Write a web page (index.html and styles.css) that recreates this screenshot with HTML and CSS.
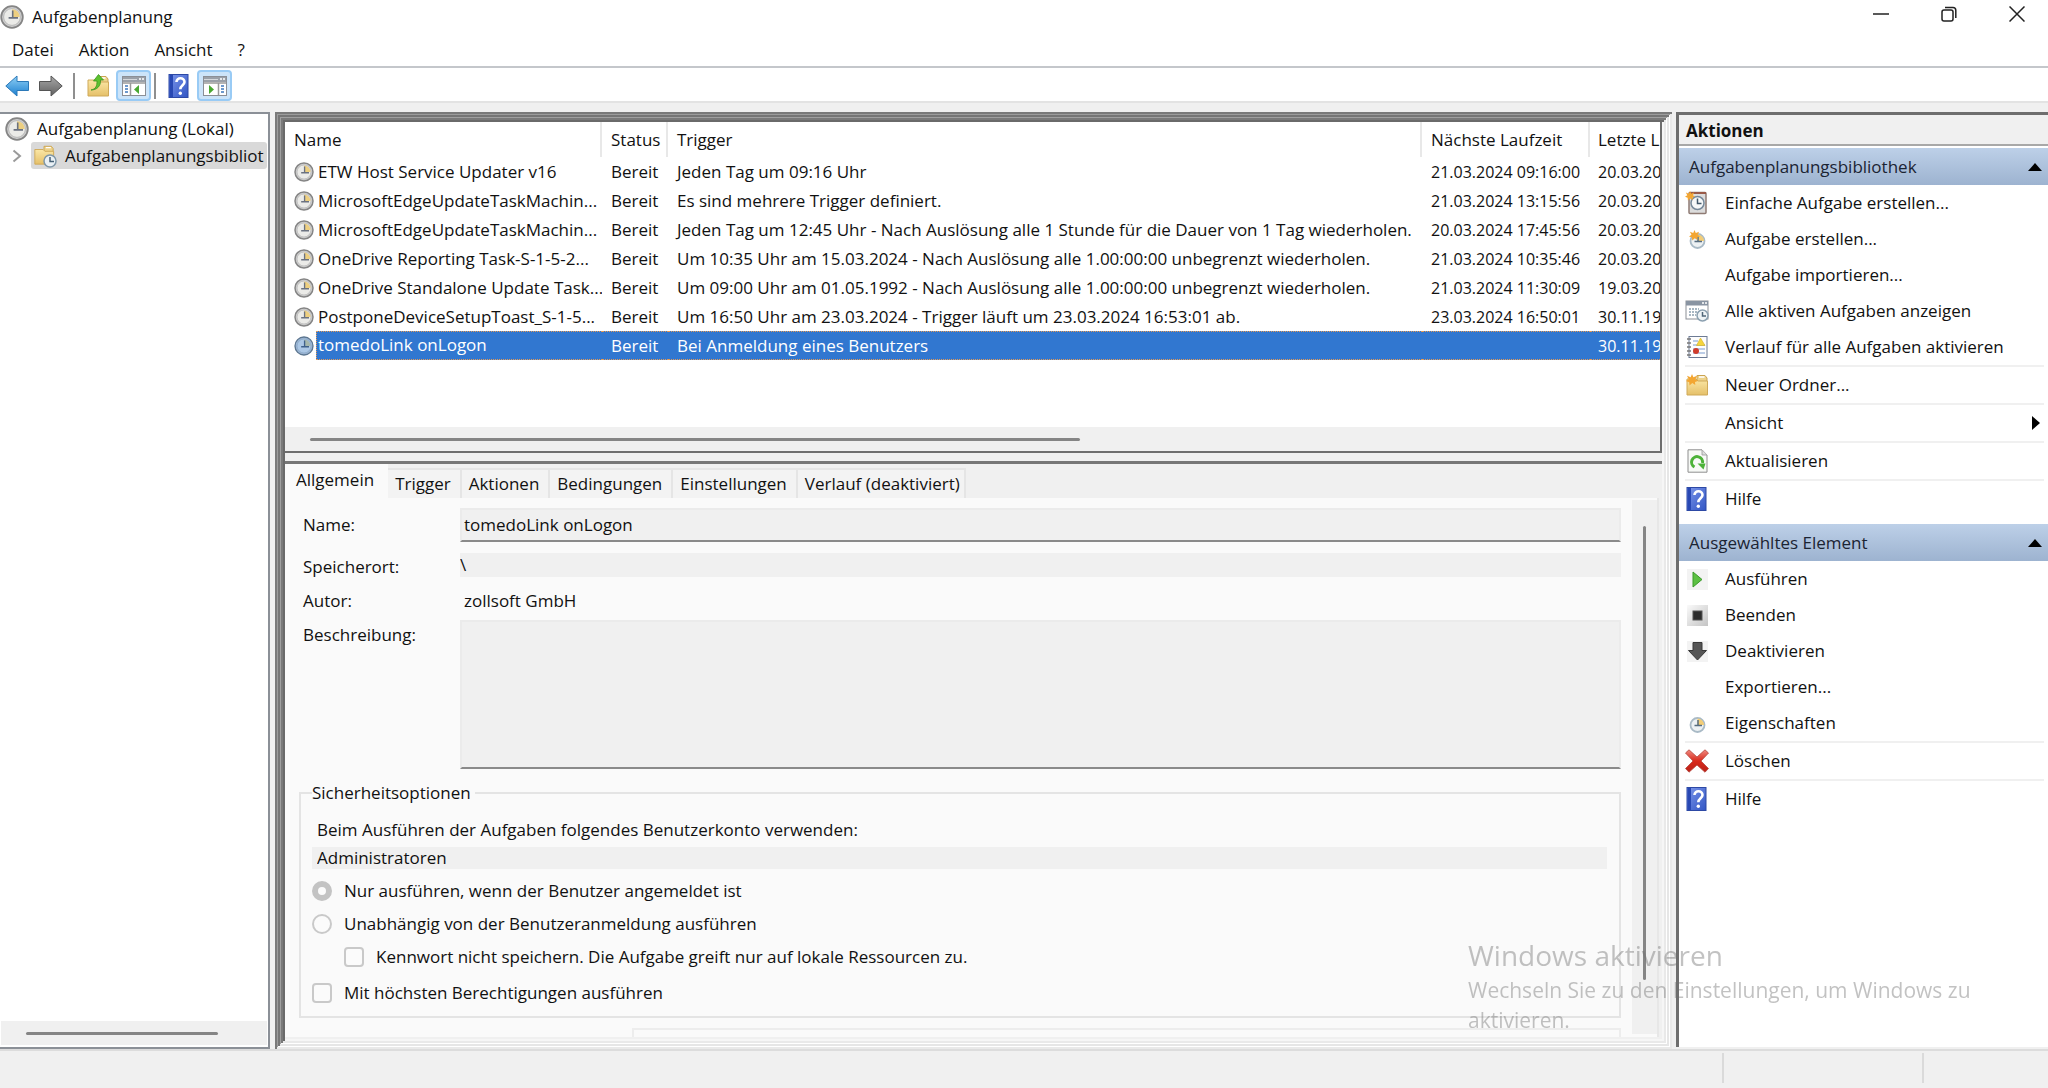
FILE: index.html
```html
<!DOCTYPE html>
<html lang="de">
<head>
<meta charset="utf-8">
<title>Aufgabenplanung</title>
<link rel="stylesheet" href="styles.css">
</head>
<body>
<svg class="defs" aria-hidden="true">
  <defs>
    <linearGradient id="g-blue" x1="0" y1="0" x2="0" y2="1"><stop offset="0" stop-color="#8fd0f5"/><stop offset="1" stop-color="#1c7fd0"/></linearGradient>
    <linearGradient id="g-grey" x1="0" y1="0" x2="0" y2="1"><stop offset="0" stop-color="#a8a8a8"/><stop offset="1" stop-color="#606060"/></linearGradient>
    <linearGradient id="g-folder" x1="0" y1="0" x2="0" y2="1"><stop offset="0" stop-color="#fbe7a6"/><stop offset="1" stop-color="#e5c069"/></linearGradient>
    <linearGradient id="g-help" x1="0" y1="0" x2="1" y2="1"><stop offset="0" stop-color="#7d97ea"/><stop offset="1" stop-color="#3155c4"/></linearGradient>
    <linearGradient id="g-red" x1="0" y1="0" x2="0" y2="1"><stop offset="0" stop-color="#ef8a80"/><stop offset="0.5" stop-color="#d92a1c"/><stop offset="1" stop-color="#b92218"/></linearGradient>
    <linearGradient id="g-stop" x1="0" y1="0" x2="1" y2="1"><stop offset="0" stop-color="#fafafa"/><stop offset="1" stop-color="#c4c4c4"/></linearGradient>
    <symbol id="clock" viewBox="0 0 24 24">
      <circle cx="12" cy="12" r="10.8" fill="#d0d0d0" stroke="#858585" stroke-width="1.8"/>
      <circle cx="12" cy="12" r="8.4" fill="#ebebe8" stroke="#b0b0b0" stroke-width="0.8"/>
      <path d="M12 12V4.2A8 8 0 0 1 19.8 12Z" fill="#edcf80"/>
      <path d="M12.7 5.5V12.9M8.6 12.9H18" fill="none" stroke="#6b7280" stroke-width="1.6"/>
    </symbol>
    <symbol id="clock-blue" viewBox="0 0 24 24">
      <circle cx="12" cy="12" r="10.8" fill="#9cb6d4" stroke="#5c7690" stroke-width="1.6"/>
      <circle cx="12" cy="12" r="8.4" fill="#acc8e6" stroke="#86a4c4" stroke-width="0.8"/>
      <path d="M12 12V4.2A8 8 0 0 1 19.8 12Z" fill="#a5b7ac"/>
      <path d="M12.7 5.5V12.9M8.6 12.9H18" fill="none" stroke="#3f618a" stroke-width="1.6"/>
    </symbol>
    <symbol id="clock-small" viewBox="0 0 24 24">
      <circle cx="12.500" cy="14" r="7" fill="#edf1f3" stroke="#a9bac6" stroke-width="1.8"/>
      <path d="M12.500 14V7.500A6.500 6.500 0 0 1 19 14Z" fill="#f3cd76"/>
      <path d="M13 9V14.500M9.500 14.500H17" fill="none" stroke="#566d80" stroke-width="1.5"/>
    </symbol>
    <symbol id="star" viewBox="0 0 12 12"><path d="M6 0L7.400 3.300L11 1.800L9.500 5.200L12 7L9 7.900L9.300 11L6.300 9L3.500 11.500L3.200 8.200L0 7L2.700 5.200L1 1.800L4.600 3.300Z" fill="#f3a632"/></symbol>
    <symbol id="folder" viewBox="0 0 24 24">
      <path d="M12 2.500H20L22 5V12H12Z" fill="#edd28a" stroke="#cba451"/>
      <path d="M14 4H19.500" stroke="#fff" stroke-width="1.5"/>
      <path d="M2 6H11L13 8H22.500V22H2Z" fill="url(#g-folder)" stroke="#cfa959"/>
    </symbol>
    <symbol id="help" viewBox="0 0 24 24">
      <rect x="2" y="0.500" width="19" height="23" fill="url(#g-help)" stroke="#2d49a5"/>
      <rect x="2.500" y="1" width="3.500" height="22" fill="#2848b3"/>
      <path d="M9.500 8C9.500 2.800 17.500 3.200 17.500 8C17.500 11.200 13.300 11.300 13.300 15.300" fill="none" stroke="#fff" stroke-width="2.600"/>
      <circle cx="13.300" cy="19.200" r="1.700" fill="#fff"/>
    </symbol>
    <symbol id="pane-left" viewBox="0 0 24 20">
      <rect x="0.500" y="0.500" width="23" height="19" fill="#fff" stroke="#8b8f96"/>
      <rect x="1" y="1" width="22" height="5" fill="#9aa0a8"/><path d="M1 3.500H15" stroke="#d5d8dc"/><path d="M17 3H22" stroke="#fff" stroke-width="1.500" stroke-dasharray="2 1"/>
      <path d="M1 7H23M8.500 7V19" stroke="#9a9a9a" stroke-width="1.500"/>
      <path d="M3 10H6M3 13H6M3 16H6" stroke="#3e78bd" stroke-width="1.500"/>
      <path d="M17 9V18L12 13.500Z" fill="#4aa832"/>
    </symbol>
    <symbol id="pane-right" viewBox="0 0 24 20">
      <rect x="0.500" y="0.500" width="23" height="19" fill="#fff" stroke="#8b8f96"/>
      <rect x="1" y="1" width="22" height="5" fill="#9aa0a8"/><path d="M1 3.500H15" stroke="#d5d8dc"/><path d="M17 3H22" stroke="#fff" stroke-width="1.500" stroke-dasharray="2 1"/>
      <path d="M1 7H23M15.500 7V19" stroke="#9a9a9a" stroke-width="1.500"/>
      <path d="M18 10H21M18 13H21M18 16H21" stroke="#3e78bd" stroke-width="1.500"/>
      <path d="M6 9V18L11 13.500Z" fill="#4aa832"/>
    </symbol>
  </defs>
</svg>

<header class="titlebar">
  <svg class="ico24"><use href="#clock"/></svg>
  <h1>Aufgabenplanung</h1>
  <div class="window-controls">
    <button aria-label="Minimieren"><svg viewBox="0 0 16 16"><path d="M0 8H16" stroke="#222" stroke-width="1.500"/></svg></button>
    <button aria-label="Wiederherstellen"><svg viewBox="0 0 16 16" fill="none" stroke="#222" stroke-width="1.500"><rect x="1" y="4" width="11" height="11" rx="2"/><path d="M4 1.500H12Q14.800 1.500 14.800 4.300V12"/></svg></button>
    <button aria-label="Schließen"><svg viewBox="0 0 16 16"><path d="M0.500 0.500L15.500 15.500M15.500 0.500L0.500 15.500" stroke="#222" stroke-width="1.500"/></svg></button>
  </div>
</header>

<nav class="menubar">
  <button>Datei</button><button>Aktion</button><button>Ansicht</button><button>?</button>
</nav>

<div class="toolbar">
  <button aria-label="Zurück"><svg class="ico24" viewBox="0 0 24 24"><path d="M0.800 12L12 2V7.500H23.500V16.500H12V22Z" fill="url(#g-blue)" stroke="#2b79b8"/></svg></button>
  <button aria-label="Vorwärts"><svg class="ico24" viewBox="0 0 24 24"><path d="M23.200 12L12 2V7.500H0.500V16.500H12V22Z" fill="url(#g-grey)" stroke="#555"/></svg></button>
  <span class="tool-sep"></span>
  <button aria-label="Übergeordneter Ordner"><svg class="ico24" viewBox="0 0 24 24"><use href="#folder"/><path d="M5 16C10 15 11 12 11 7H7.500L12.500 0.500L17.500 6H14.500C15 12 11 16 5 16Z" fill="#5dc12f" stroke="#3b9420" stroke-width="0.800"/></svg></button>
  <button class="pressed" aria-label="Konsolenstruktur"><svg class="pane-ico"><use href="#pane-left"/></svg></button>
  <span class="tool-sep"></span>
  <button aria-label="Hilfe"><svg class="ico24"><use href="#help"/></svg></button>
  <button class="pressed" aria-label="Aktionsbereich"><svg class="pane-ico"><use href="#pane-right"/></svg></button>
</div>

<div class="workspace">
  <aside class="tree">
    <ul>
      <li><svg class="ico24"><use href="#clock"/></svg><span>Aufgabenplanung (Lokal)</span></li>
      <li class="child">
        <svg class="chevron" viewBox="0 0 10 14"><path d="M1.500 1.500L8 7L1.500 12.500" fill="none" stroke="#9a9a9a" stroke-width="2"/></svg>
        <div class="selected-node">
          <svg class="ico24" viewBox="0 0 24 24"><use href="#folder" width="22" height="22"/><circle cx="17" cy="17" r="6" fill="#e9f0f5" stroke="#7f97a8" stroke-width="1.500"/><path d="M17 13V17.500H21" fill="none" stroke="#455f74" stroke-width="1.500"/></svg>
          <span>Aufgabenplanungsbibliot</span>
        </div>
      </li>
    </ul>
    <div class="hscroll"><span class="thumb tree-thumb"></span></div>
  </aside>

  <main class="center">
    <section class="tasks">
      <div class="table-wrap">
        <table>
          <colgroup><col class="c-name"><col class="c-status"><col class="c-trigger"><col class="c-next"><col></colgroup>
          <thead><tr><th>Name</th><th>Status</th><th>Trigger</th><th>Nächste Laufzeit</th><th>Letzte L</th></tr></thead>
          <tbody>
            <tr><td><div class="task"><svg><use href="#clock"/></svg><span>ETW Host Service Updater v16</span></div></td><td>Bereit</td><td>Jeden Tag um 09:16 Uhr</td><td class="date">21.03.2024 09:16:00</td><td class="date">20.03.20</td></tr>
            <tr><td><div class="task"><svg><use href="#clock"/></svg><span>MicrosoftEdgeUpdateTaskMachin...</span></div></td><td>Bereit</td><td>Es sind mehrere Trigger definiert.</td><td class="date">21.03.2024 13:15:56</td><td class="date">20.03.20</td></tr>
            <tr><td><div class="task"><svg><use href="#clock"/></svg><span>MicrosoftEdgeUpdateTaskMachin...</span></div></td><td>Bereit</td><td>Jeden Tag um 12:45 Uhr - Nach Auslösung alle 1 Stunde für die Dauer von 1 Tag wiederholen.</td><td class="date">20.03.2024 17:45:56</td><td class="date">20.03.20</td></tr>
            <tr><td><div class="task"><svg><use href="#clock"/></svg><span>OneDrive Reporting Task-S-1-5-2...</span></div></td><td>Bereit</td><td>Um 10:35 Uhr am 15.03.2024 - Nach Auslösung alle 1.00:00:00 unbegrenzt wiederholen.</td><td class="date">21.03.2024 10:35:46</td><td class="date">20.03.20</td></tr>
            <tr><td><div class="task"><svg><use href="#clock"/></svg><span>OneDrive Standalone Update Task...</span></div></td><td>Bereit</td><td>Um 09:00 Uhr am 01.05.1992 - Nach Auslösung alle 1.00:00:00 unbegrenzt wiederholen.</td><td class="date">21.03.2024 11:30:09</td><td class="date">19.03.20</td></tr>
            <tr><td><div class="task"><svg><use href="#clock"/></svg><span>PostponeDeviceSetupToast_S-1-5...</span></div></td><td>Bereit</td><td>Um 16:50 Uhr am 23.03.2024 - Trigger läuft um 23.03.2024 16:53:01 ab.</td><td class="date">23.03.2024 16:50:01</td><td class="date">30.11.19</td></tr>
            <tr class="selected"><td><div class="task"><svg><use href="#clock-blue"/></svg><span>tomedoLink onLogon</span></div></td><td>Bereit</td><td>Bei Anmeldung eines Benutzers</td><td></td><td class="date">30.11.19</td></tr>
          </tbody>
        </table>
      </div>
      <div class="hscroll"><span class="thumb list-thumb"></span></div>
    </section>

    <section class="details">
      <div class="tabs" role="tablist">
        <button role="tab" class="active" aria-selected="true">Allgemein</button>
        <button role="tab">Trigger</button>
        <button role="tab">Aktionen</button>
        <button role="tab">Bedingungen</button>
        <button role="tab">Einstellungen</button>
        <button role="tab">Verlauf (deaktiviert)</button>
      </div>
      <div class="tab-body">
        <form class="general">
          <div class="fields">
            <label for="f-name">Name:</label>
            <input id="f-name" class="box" type="text" value="tomedoLink onLogon" readonly>
            <label for="f-path">Speicherort:</label>
            <input id="f-path" class="flat" type="text" value="\" readonly>
            <span>Autor:</span>
            <span class="author">zollsoft GmbH</span>
            <label for="f-desc" class="top">Beschreibung:</label>
            <textarea id="f-desc" class="box desc" readonly></textarea>
          </div>
          <fieldset>
            <legend>Sicherheitsoptionen</legend>
            <label class="account-label" for="f-account">Beim Ausführen der Aufgaben folgendes Benutzerkonto verwenden:</label>
            <input id="f-account" class="account" type="text" value="Administratoren" readonly>
            <label class="option"><input type="radio" name="run" checked disabled>Nur ausführen, wenn der Benutzer angemeldet ist</label>
            <label class="option"><input type="radio" name="run" disabled>Unabhängig von der Benutzeranmeldung ausführen</label>
            <label class="option sub"><input type="checkbox" disabled>Kennwort nicht speichern. Die Aufgabe greift nur auf lokale Ressourcen zu.</label>
            <label class="option last"><input type="checkbox" disabled>Mit höchsten Berechtigungen ausführen</label>
          </fieldset>
          <div class="next-box"></div>
        </form>
        <div class="vscroll"><span></span></div>
      </div>
    </section>
  </main>

  <aside class="actions">
    <h2>Aktionen</h2>
    <h3>Aufgabenplanungsbibliothek<svg viewBox="0 0 14 8"><path d="M7 0L14 8H0Z"/></svg></h3>
    <ul>
      <li><button><svg class="ico24" viewBox="0 0 24 24"><rect x="4" y="1.500" width="17" height="21" rx="1" fill="#dcdcdc" stroke="#8f7b74" stroke-width="1.500"/><path d="M4 2H21" stroke="#9a5a48" stroke-width="2"/><circle cx="12.500" cy="12" r="6.500" fill="#f6f8f9" stroke="#76899a" stroke-width="1.500"/><path d="M12.500 7.500V12.500H16.500" fill="none" stroke="#41586c" stroke-width="1.500"/><use href="#star" width="10" height="10"/></svg>Einfache Aufgabe erstellen...</button></li>
      <li><button><svg class="ico24" viewBox="0 0 24 24"><use href="#clock-small"/><use href="#star" x="4" y="3" width="11" height="11"/></svg>Aufgabe erstellen...</button></li>
      <li><button><i class="ico24"></i>Aufgabe importieren...</button></li>
      <li><button><svg class="ico24" viewBox="0 0 24 24"><rect x="1" y="2" width="22" height="18" fill="#fff" stroke="#8b8f96"/><rect x="1" y="2" width="22" height="4.500" fill="#8994a2"/><path d="M17 4H22" stroke="#fff" stroke-width="1.500" stroke-dasharray="2 1"/><path d="M4 10H14M4 13H12M4 16H11" stroke="#8ca0b0" stroke-width="1.500" stroke-dasharray="2 1"/><circle cx="17.500" cy="16.500" r="5.500" fill="#eef3f6" stroke="#8ba0b0" stroke-width="1.500"/><path d="M17.500 13V17H21" fill="none" stroke="#4f6678" stroke-width="1.500"/></svg>Alle aktiven Aufgaben anzeigen</button></li>
      <li><button><svg class="ico24" viewBox="0 0 24 24"><rect x="4" y="1.500" width="18" height="21" fill="#fdfdfd" stroke="#6d7b94"/><path d="M2 4H6M2 8H6M2 12H6M2 16H6M2 20H6" stroke="#777" stroke-width="1.500"/><path d="M8 6H13M8 10H20M8 14H20M8 18H20" stroke="#7a9bd0" stroke-width="1.200"/><path d="M15.500 3L20 10.500H11.500Z" fill="#f5d53c" stroke="#d1ad1c" stroke-width="0.600"/><circle cx="11" cy="16" r="3" fill="#cf3b2a"/></svg>Verlauf für alle Aufgaben aktivieren</button></li>
      <li class="sep"><button><svg class="ico24" viewBox="0 0 24 24"><use href="#folder"/><use href="#star" x="1" y="1" width="12" height="12"/></svg>Neuer Ordner...</button></li>
      <li class="sep"><button><i class="ico24"></i>Ansicht<svg class="submenu" viewBox="0 0 8 14"><path d="M0 0L8 7L0 14Z"/></svg></button></li>
      <li class="sep"><button><svg class="ico24" viewBox="0 0 24 24"><path d="M3 0.800H17L22 6V23.200H3Z" fill="#f7f9f6" stroke="#8e8e8e"/><path d="M17 1V6H22" fill="#ddd" stroke="#999" stroke-width="0.800"/><path d="M9.500 18A5.500 5.500 0 1 1 17.500 14" fill="none" stroke="#4cb238" stroke-width="3"/><path d="M12.500 14.500H20.500L18.500 20.500Z" fill="#4cb238"/></svg>Aktualisieren</button></li>
      <li class="sep"><button><svg class="ico24"><use href="#help"/></svg>Hilfe</button></li>
    </ul>
    <h3>Ausgewähltes Element<svg viewBox="0 0 14 8"><path d="M7 0L14 8H0Z"/></svg></h3>
    <ul>
      <li><button><svg class="ico24" viewBox="0 0 24 24"><rect x="2" y="2" width="21" height="21" fill="#f3f3f3"/><path d="M8 5L17 12.500L8 20Z" fill="#5cc043" stroke="#3a9a2a"/></svg>Ausführen</button></li>
      <li><button><svg class="ico24" viewBox="0 0 24 24"><rect x="2" y="2" width="21" height="21" fill="url(#g-stop)"/><rect x="8" y="8" width="9" height="9" fill="#2c2c2c" stroke="#555"/></svg>Beenden</button></li>
      <li><button><svg class="ico24" viewBox="0 0 24 24"><rect x="2" y="2" width="21" height="21" fill="#f3f3f3"/><path d="M8 3.500H17V11.500H21.500L12.500 21L3.500 11.500H8Z" fill="#555" stroke="#383838"/></svg>Deaktivieren</button></li>
      <li><button><i class="ico24"></i>Exportieren...</button></li>
      <li><button><svg class="ico24"><use href="#clock-small"/></svg>Eigenschaften</button></li>
      <li class="sep"><button><svg class="ico24" viewBox="0 0 24 24"><path d="M4 0.800L12 8L20 0.800L23.500 4L16 12L23.500 19.500L20 23.200L12 16L4 23.200L0.500 19.500L8 12L0.500 4Z" fill="url(#g-red)" stroke="#b5463e" stroke-width="0.800" stroke-linejoin="round"/></svg>Löschen</button></li>
      <li class="sep"><button><svg class="ico24"><use href="#help"/></svg>Hilfe</button></li>
    </ul>
  </aside>
</div>

<footer class="statusbar"><span></span><span></span><span></span></footer>

<div class="watermark">
  <p class="wm-title">Windows aktivieren</p>
  <p>Wechseln Sie zu den Einstellungen, um Windows zu aktivieren.</p>
</div>
</body>
</html>
```

FILE: styles.css
```css
* { box-sizing: border-box; }

body {
  margin: 0;
  height: 100vh;
  display: flex;
  flex-direction: column;
  overflow: hidden;
  background: #f0f0f0;
  color: #111;
  font: 17px/24px "Open Sans", "Noto Sans", sans-serif;
}

h1, h2, h3, p, ul { margin: 0; padding: 0; font-size: inherit; font-weight: 400; }
ul { list-style: none; }
button, input, textarea { font: inherit; color: inherit; margin: 0; padding: 0; border: 0; background: none; border-radius: 0; }
svg { display: block; flex: none; }
.defs { position: absolute; width: 0; height: 0; }
.ico24 { width: 24px; height: 24px; flex: none; }

/* Title, menu and tool bars */
.titlebar { display: flex; align-items: center; gap: 8px; height: 33px; background: #fff; }
.titlebar h1 { flex: 1; }
.window-controls { display: flex; gap: 52px; padding-right: 23px; align-self: flex-start; padding-top: 6px; }
.window-controls svg { width: 16px; height: 16px; }

.menubar { display: flex; align-items: center; gap: 25px; height: 35px; padding: 0 12px; background: #fff; border-bottom: 2px solid #c4c7cb; }

.toolbar { display: flex; align-items: flex-end; height: 35px; padding-left: 5px; background: #fff; border-bottom: 2px solid #e3e3e3; }
.toolbar button { display: flex; align-items: center; justify-content: center; width: 24px; height: 31px; margin-right: 10px; }
.toolbar .pressed { width: 35px; margin: 0 4px; background: #cce4f9; border: 2px solid #99cbf5; border-radius: 4px; }
.tool-sep { width: 2px; height: 26px; margin: 0 11px 2px 0; background: #8f8f8f; }
.toolbar .pressed + .tool-sep { margin-left: -1px; }
.toolbar button:has(+ .pressed) { margin-right: 2px; }
.pane-ico { width: 24px; height: 20px; }

/* Three panes */
.workspace { flex: 1; min-height: 0; display: flex; padding-top: 9px; }

.tree { width: 270px; display: flex; flex-direction: column; background: #fff; border: 2px solid #8b9097; border-left: 0; padding-right: 1px; margin-right: 5px; }
.tree ul { flex: 1; padding-top: 1px; overflow: hidden; white-space: nowrap; }
.tree li { display: flex; align-items: center; gap: 8px; height: 27px; padding-left: 5px; }
.tree .child { padding-left: 12px; gap: 9px; }
.chevron { width: 10px; height: 14px; }
.selected-node { flex: 1; min-width: 0; display: flex; align-items: center; gap: 8px; height: 27px; padding-left: 2px; overflow: hidden; background: #d9d9d9; border-radius: 3px; }
.hscroll { height: 24px; flex: none; display: flex; align-items: center; background: #f0f0f0; }
.tree .hscroll { margin: 0 0 2px 1px; }
.thumb { height: 3px; border-radius: 2px; background: #858585; }
.tree-thumb { width: 72%; margin-left: 25px; }
.list-thumb { width: 56%; margin-left: 25px; }

.center {
  flex: 1;
  min-width: 0;
  display: flex;
  flex-direction: column;
  gap: 8px;
  padding: 10px 10px 12px 10px;
  margin-right: 4px;
  box-shadow:
    inset 2px 2px #7a7a7a, inset -2px -2px #e9e9e9,
    inset 3px 3px #9c9c9c, inset -3px -3px #fff,
    inset 5px 5px #767676, inset -5px -5px #e6e6e6,
    inset 6px 6px #a0a0a0, inset -6px -6px #fff,
    inset 8px 8px #7a7a7a, inset -8px -8px #e9e9e9,
    inset 10px 10px #6a6a6a, inset -10px -10px #f6f6f6;
}

/* Task list */
.tasks { display: flex; flex-direction: column; height: 331px; flex: none; background: #fff; border: 2px solid #6e6e6e; border-width: 0 2px 2px 0; }
.table-wrap { flex: 1; overflow: hidden; }
table { width: 100%; table-layout: fixed; border-collapse: separate; border-spacing: 0; white-space: nowrap; }
.c-name { width: 317px; }
.c-status { width: 66px; }
.c-trigger { width: 754px; }
.c-next { width: 168px; }
th { height: 35px; padding: 0 0 0 9px; text-align: left; font-weight: 400; border-right: 2px solid #e8e8e8; overflow: hidden; }
th:last-child { border-right: 0; padding-left: 8px; }
td { height: 29px; padding: 0 0 0 9px; overflow: hidden; }
td:last-child { padding-left: 8px; }
td.date { font-size: 16px; }
.task { display: flex; align-items: center; gap: 2px; }
.task svg { width: 20px; height: 20px; }
.task span { flex: 1; height: 29px; line-height: 29px; padding-left: 2px; }
.selected td, .selected .task span { background: #3177d0; color: #fff; border: 1px dotted #e59a55; border-width: 1px 0; }
.selected td:first-child { background: none; border: 0; }
.selected .task span { border-left-width: 1px; padding-left: 1px; line-height: 26px; }

/* Tabbed details */
.details { flex: 1; min-height: 0; display: flex; flex-direction: column; border-top: 3px solid #777; }
.tabs { display: flex; align-items: flex-end; height: 34px; flex: none; }
.tabs button { height: 30px; padding: 0 9px 0 7px; background: #f3f3f3; border: 2px solid #e5e5e5; border-width: 2px 2px 0 0; }
.tabs button:last-child { padding-right: 4px; }
.tabs .active { height: 34px; padding: 0 14px 2px 11px; background: #fafafa; border: 0; }
.tab-body { flex: 1; min-height: 0; display: flex; background: #fafafa; border: 2px solid #e7e7e7; border-width: 0 2px 0 0; margin-right: 3px; }
.general { flex: 1; min-width: 0; padding: 10px 11px 0 14px; overflow: hidden; }
.fields { display: grid; grid-template-columns: 157px 1fr; align-items: center; padding-left: 4px; }
.box { height: 34px; margin-bottom: 11px; padding: 0 2px 2px; background: #f0f0f0; border: 2px solid #ebebeb; border-bottom-color: #8a8a8a; min-width: 0; }
.fields label[for="f-name"] { padding-bottom: 12px; }
.flat { height: 24px; margin-bottom: 12px; background: #f0f0f0; min-width: 0; }
.fields label[for="f-path"] { padding-bottom: 8px; }
.author { padding-left: 4px; }
.top { align-self: start; padding-top: 10px; }
.desc { height: 149px; margin: 7px 0 0; resize: none; display: block; }
fieldset { margin: 12px 0 0; padding: 13px 12px 11px 11px; border: 2px solid #e4e4e4; min-width: 0; }
legend { padding: 0 4px 0 0; line-height: 24px; }
.account-label { display: block; padding-left: 5px; }
.account { display: block; width: 100%; height: 22px; margin: 5px 0 10px; padding-left: 5px; background: #f0f0f0; }
.option { display: flex; align-items: center; gap: 12px; margin-bottom: 9px; }
.option.sub { padding-left: 32px; margin-bottom: 12px; }
.option.last { margin-bottom: 0; }
.option input { appearance: none; width: 20px; height: 20px; border: 2px solid #c9c9c9; border-radius: 4px; background: #fbfbfb; }
.option input[type="radio"] { border-radius: 50%; }
.option input[type="radio"]:checked { border-width: 6px; border-color: #c3c3c3; }
.next-box { height: 10px; margin: 10px 0 0 333px; border: 2px solid #ededed; border-bottom: 0; }
.vscroll { width: 25px; margin: 2px 0 3px; display: flex; justify-content: center; background: #f0f0f0; }
.vscroll span { width: 3px; height: 85%; margin-top: 26px; border-radius: 2px; background: #858585; }

/* Actions pane */
.actions { width: 372px; flex: none; margin-bottom: 2px; background: #fff; border: solid #6e6e6e; border-width: 3px 0 0 3px; }
.actions h2 { height: 31px; padding-left: 7px; line-height: 31px; font-weight: 700; font-size: 17px; background: #f0f0f0; border-bottom: 2px solid #a8a8a8; margin-bottom: 2px; }
.actions h3 { display: flex; align-items: center; justify-content: space-between; height: 37px; padding: 0 6px 0 10px; background: linear-gradient(#bdd0e8, #9db3d0); color: #1b2433; }
.actions h3 svg { width: 14px; height: 8px; }
.actions ul { padding: 0 4px 7px 6px; }
.actions li { height: 36px; }
.actions .sep { height: 38px; border-top: 2px solid #f0f0f0; }
.actions li button { display: flex; align-items: center; gap: 16px; width: 100%; height: 36px; text-align: left; }
.submenu { width: 8px; height: 14px; margin: 0 4px 0 auto; }

/* Status bar */
.statusbar { display: flex; height: 39px; flex: none; border-top: 2px solid #dcdcdc; padding: 2px 0 5px; }
.statusbar span { width: 200px; border-right: 2px solid #dadada; }
.statusbar span:first-child { flex: 1; }
.statusbar span:last-child { width: 124px; border: 0; }

/* Activation notice lies over all panes */
.watermark { position: fixed; right: 48px; bottom: 53px; width: 532px; color: rgba(110, 110, 110, 0.42); pointer-events: none; font-size: 21px; line-height: 30px; }
.wm-title { font-size: 28px; line-height: 36px; margin-bottom: 2px; }
```
